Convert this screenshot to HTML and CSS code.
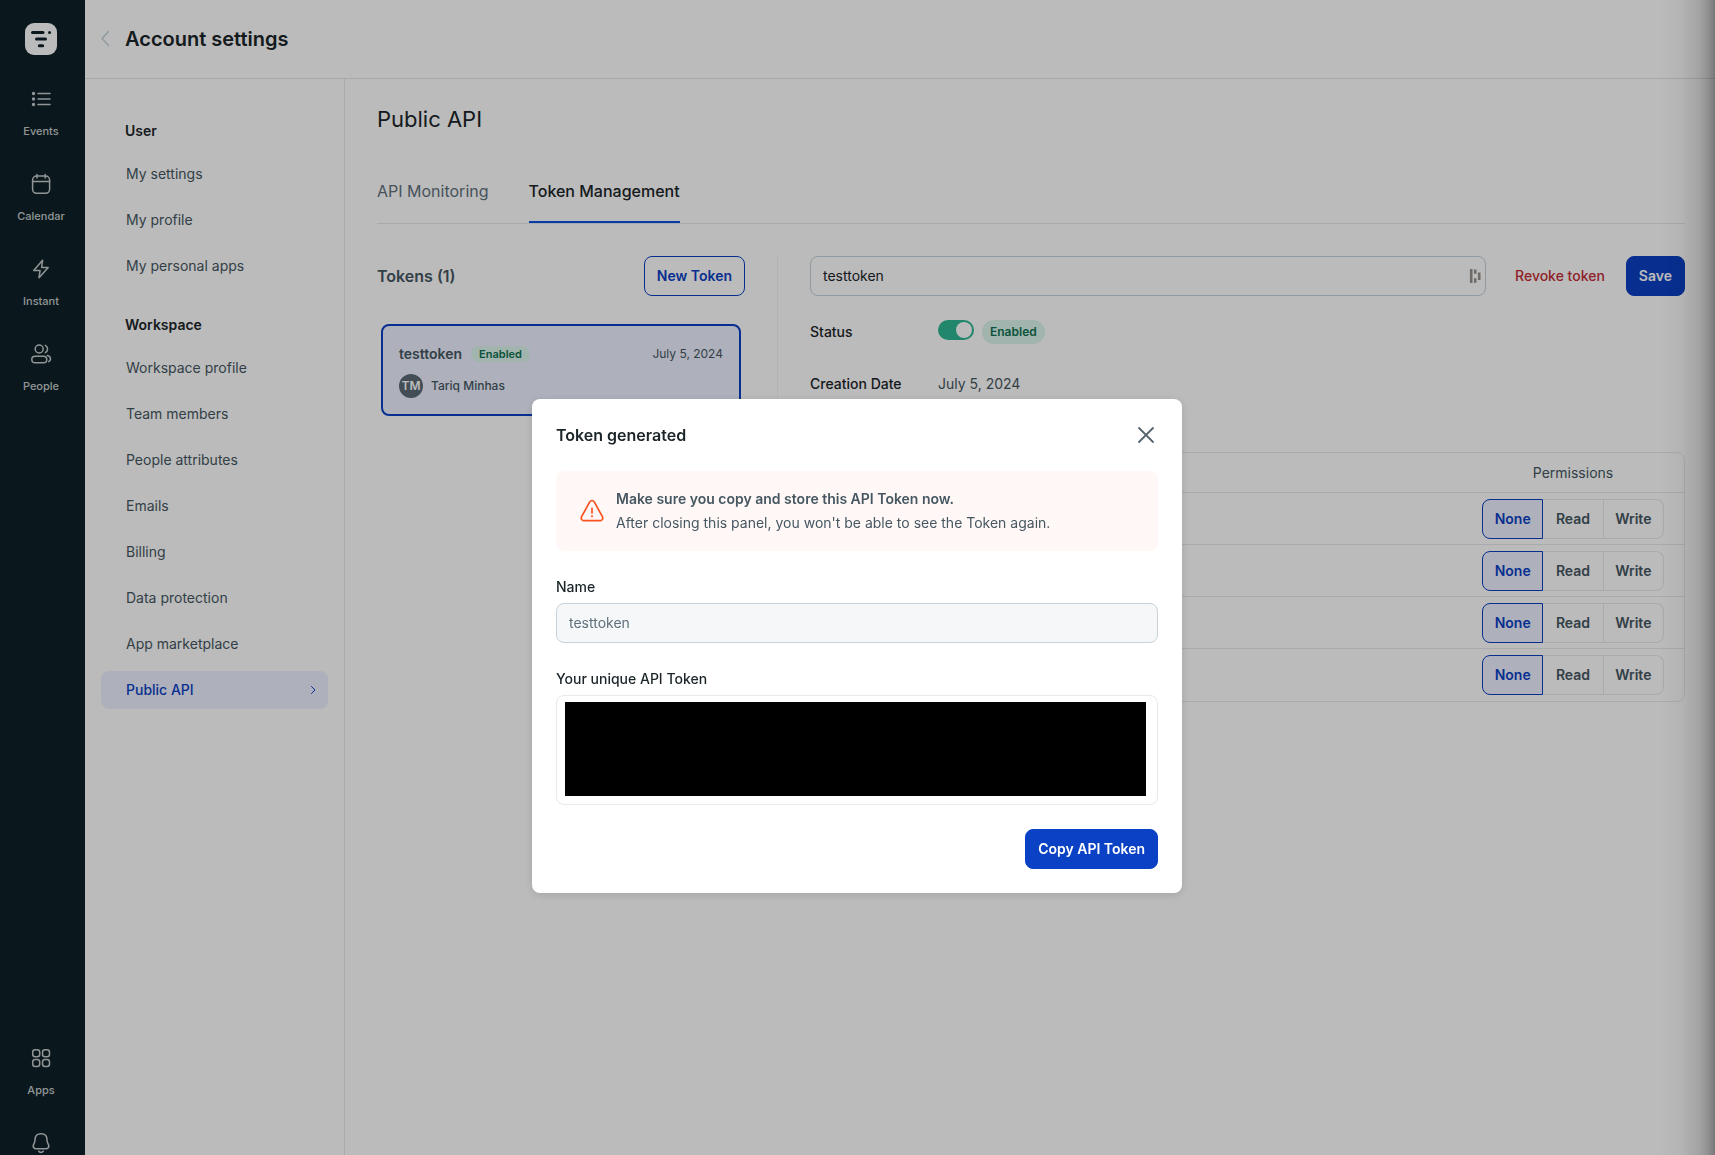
FILE: index.html
```html
<!DOCTYPE html>
<html lang="en">
<head>
<meta charset="utf-8">
<meta name="viewport" content="width=device-width, initial-scale=1">
<title>Account settings</title>
<link rel="stylesheet" href="styles.css">
</head>
<body>
<div class="app">
  <nav class="rail" aria-label="Main">
    <a class="rail-logo" href="#" aria-label="Home">
      <svg width="32" height="32" viewBox="0 0 32 32"><rect width="32" height="32" rx="9" fill="#fff" stroke="none"/><g stroke="#0e2229" stroke-width="3" stroke-linecap="round"><path d="M7.500 9.500h10.500M11.500 16h9M14.300 22.800h3.400"/><path d="M24.500 9.500h.01"/></g></svg>
    </a>
    <a class="rail-item" href="#">
      <svg class="icon" viewBox="0 0 24 24"><path d="M9 6.500h12M9 12h12M9 17.500h12"/><path d="M4.500 6.500h.01M4.500 12h.01M4.500 17.500h.01" stroke-width="3.400"/></svg>
      <span>Events</span>
    </a>
    <a class="rail-item" href="#">
      <svg class="icon" viewBox="0 0 24 24"><rect x="3.600" y="4" width="17" height="17.300" rx="4"/><path d="M3.600 9.500h17M8 2.500V6M16.200 2.500V6"/></svg>
      <span>Calendar</span>
    </a>
    <a class="rail-item" href="#">
      <svg class="icon" viewBox="0 0 24 24"><path d="M13.600 3.300 4.700 13.400h6.400l-1.100 7.300 9.200-10.200h-6.600z"/></svg>
      <span>Instant</span>
    </a>
    <a class="rail-item" href="#">
      <svg class="icon" viewBox="0 0 24 24"><circle cx="10.200" cy="7" r="4"/><rect x="2.800" y="14.200" width="15" height="6.600" rx="3.300"/><path d="M16.300 3.400a4 4 0 0 1 0 7.200M18.300 13.400c4 .8 4 5 1.300 6.200"/></svg>
      <span>People</span>
    </a>
    <div class="rail-bottom">
      <a class="rail-item" href="#">
        <svg class="icon" viewBox="0 0 24 24"><rect x="3.700" y="3.700" width="7" height="7" rx="2.500"/><rect x="13.500" y="3.700" width="7" height="7" rx="2.500"/><rect x="3.700" y="13.500" width="7" height="7" rx="2.500"/><rect x="13.500" y="13.500" width="7" height="7" rx="2.500"/></svg>
        <span>Apps</span>
      </a>
      <a class="rail-item rail-item-last" href="#" aria-label="Notifications">
        <svg class="icon" viewBox="0 0 24 24"><path d="M12 2.800c-4 0-6 2.700-6 6.200 0 3.400-1.800 4-1.800 6 0 1.800 1.200 2.700 2.800 2.700h10c1.600 0 2.800-.9 2.800-2.700 0-2-1.800-2.600-1.800-6 0-3.500-2-6.200-6-6.200zM9.700 20.200c.9 1.600 3.700 1.600 4.600 0"/></svg>
      </a>
    </div>
  </nav>

  <div class="shell">
    <header class="topbar">
      <a class="back" href="#" aria-label="Back"><svg width="10" height="18" viewBox="0 0 10 18"><path d="M8.500 1.500 2 8.500l6.500 7"/></svg></a>
      <h1>Account settings</h1>
    </header>
    <div class="body">
      <nav class="sidenav" aria-label="Settings">
        <section class="nav-group">
          <h2>User</h2>
          <a href="#">My settings</a>
          <a href="#">My profile</a>
          <a href="#">My personal apps</a>
        </section>
        <section class="nav-group">
          <h2>Workspace</h2>
          <a href="#">Workspace profile</a>
          <a href="#">Team members</a>
          <a href="#">People attributes</a>
          <a href="#">Emails</a>
          <a href="#">Billing</a>
          <a href="#">Data protection</a>
          <a href="#">App marketplace</a>
          <a class="active" href="#" aria-current="page">Public API <svg width="6" height="10" viewBox="0 0 6 10"><path d="m1.500 1.500 3.500 3.500-3.500 3.500"/></svg></a>
        </section>
      </nav>

      <main class="content">
        <h2 class="page-title">Public API</h2>
        <div class="tabs">
          <a href="#">API Monitoring</a>
          <a class="selected" href="#">Token Management</a>
        </div>
        <div class="columns">
          <section class="tokens">
            <div class="tokens-head">
              <h3>Tokens (1)</h3>
              <button class="btn btn-outline" type="button">New Token</button>
            </div>
            <article class="token-card">
              <div class="token-row">
                <strong>testtoken</strong>
                <span class="badge badge-small">Enabled</span>
                <time>July 5, 2024</time>
              </div>
              <div class="token-owner"><span class="avatar">TM</span>Tariq Minhas</div>
            </article>
          </section>

          <section class="detail">
            <form class="detail-head">
              <div class="name-field">
                <input type="text" value="testtoken" aria-label="Token name">
                <svg width="12" height="16" viewBox="0 0 12 16"><path d="M2.200 1v14M6.200 1.500v4.300M6.200 10.300v4.400M10.200 4.500v7.500"/></svg>
              </div>
              <button class="link-danger" type="button">Revoke token</button>
              <button class="btn btn-primary" type="submit">Save</button>
            </form>
            <dl class="facts">
              <dt><label for="status">Status</label></dt>
              <dd><input class="toggle" id="status" type="checkbox" checked><span class="badge">Enabled</span></dd>
              <dt>Creation Date</dt>
              <dd>July 5, 2024</dd>
            </dl>
            <table class="perms">
              <thead><tr><th></th><th class="perm-col">Permissions</th></tr></thead>
              <tbody>
                <tr><td></td><td><div class="segment">
                  <label><input type="radio" name="p1" checked>None</label><label><input type="radio" name="p1">Read</label><label><input type="radio" name="p1">Write</label></div></td></tr>
                <tr><td></td><td><div class="segment">
                  <label><input type="radio" name="p2" checked>None</label><label><input type="radio" name="p2">Read</label><label><input type="radio" name="p2">Write</label></div></td></tr>
                <tr><td></td><td><div class="segment">
                  <label><input type="radio" name="p3" checked>None</label><label><input type="radio" name="p3">Read</label><label><input type="radio" name="p3">Write</label></div></td></tr>
                <tr><td></td><td><div class="segment">
                  <label><input type="radio" name="p4" checked>None</label><label><input type="radio" name="p4">Read</label><label><input type="radio" name="p4">Write</label></div></td></tr>
              </tbody>
            </table>
          </section>
        </div>
      </main>
    </div>
  </div>
</div>

<div class="scrim">
  <div class="modal" role="dialog" aria-modal="true" aria-labelledby="modal-title">
    <div class="modal-head">
      <h2 id="modal-title">Token generated</h2>
      <button class="close" type="button" aria-label="Close"><svg width="24" height="24" viewBox="0 0 24 24"><path d="m5 5 14 14M19 5 5 19"/></svg></button>
    </div>
    <div class="notice">
      <svg width="24" height="24" viewBox="0 0 24 24"><path d="M9.900 2.700 1.600 17.600c-1 2 .2 4.100 2.200 4.100h16.400c2 0 3.200-2.100 2.200-4.100L14.100 2.700c-1-1.600-3.200-1.600-4.200 0z"/><path d="M12 9.300v4.600M12 16.900v.6"/></svg>
      <p><strong>Make sure you copy and store this API Token now.</strong><br>After closing this panel, you won't be able to see the Token again.</p>
    </div>
    <div class="field">
      <label for="name">Name</label>
      <input id="name" type="text" value="testtoken" readonly>
    </div>
    <div class="field">
      <label for="token">Your unique API Token</label>
      <div class="token-box"><output id="token"></output></div>
    </div>
    <div class="modal-foot"><button class="btn btn-primary" type="button">Copy API Token</button></div>
  </div>
</div>
<div class="edge-shadow"></div>
</body>
</html>
```
FILE: styles.css
```css
:root {
  --ink: #1b2529;
  --text: #465762;
  --line: #e5eaed;
  --field: #c6d3da;
  --blue: #0b41c5;
  --blue-tint: #edf1ff;
}

* { box-sizing: border-box; }

body {
  margin: 0;
  font: 14px/24px Inter, "Liberation Sans", sans-serif;
  color: var(--text);
  background: #fff;
  overflow: hidden;
}

h1, h2, h3, p, dl, dd { margin: 0; }
a { color: inherit; text-decoration: none; }
button, input { font: inherit; color: inherit; }
button { cursor: pointer; }
svg { flex: none; fill: none; stroke: currentColor; stroke-linecap: round; stroke-linejoin: round; }

.app { display: flex; min-height: 100vh; }

/* Icon rail */
.rail {
  display: flex;
  flex-direction: column;
  width: 85px;
  height: 100vh;
  padding: 23px 3px 0 0;
  background: #0e2229;
  color: #c6cbcd;
}
.rail-logo { display: flex; align-self: center; height: 34px; }
.rail-item {
  display: flex;
  flex-direction: column;
  align-items: center;
  gap: 12px;
  height: 85px;
  padding-top: 30px;
  font-size: 11px;
  line-height: 16px;
  font-weight: 500;
}
.icon { width: 24px; height: 24px; stroke-width: 1.5; }
.rail-bottom { margin-top: auto; }
.rail-item-last { height: 54px; }

/* Header */
.shell { flex: 1; display: flex; flex-direction: column; min-width: 0; }
.topbar {
  display: flex;
  align-items: center;
  gap: 15px;
  height: 79px;
  padding: 0 15px;
  border-bottom: 1px solid #dde5e9;
}
.topbar h1 { font-size: 20px; font-weight: 600; color: var(--ink); }
.back { display: flex; color: #c6d3da; }
.back svg { stroke-width: 1.5; }
.body { flex: 1; display: flex; }

/* Settings navigation */
.sidenav {
  display: flex;
  flex-direction: column;
  gap: 28px;
  width: 260px;
  padding: 40px 16px;
  border-right: 1px solid var(--line);
}
.nav-group { display: flex; flex-direction: column; gap: 8px; }
.nav-group h2 { margin: 0 24px 4px; font-size: 14px; font-weight: 600; color: var(--ink); }
.nav-group a {
  display: flex;
  align-items: center;
  justify-content: space-between;
  height: 38px;
  padding: 0 12px 0 25px;
  border-radius: 8px;
}
.nav-group .active { background: var(--blue-tint); color: var(--blue); font-weight: 500; }

/* Content */
.content { flex: 1; min-width: 0; padding: 24px 30px 32px 32px; }
.page-title { font-size: 22px; line-height: 32px; font-weight: 400; color: var(--ink); }
.tabs { display: flex; gap: 40px; margin: 44px 0 32px; border-bottom: 1px solid var(--line); }
.tabs a { padding-bottom: 18px; border-bottom: 2px solid transparent; font-size: 16px; color: #5f717d; }
.tabs .selected { border-color: #0b50e6; font-weight: 500; color: var(--ink); }
.columns { display: flex; }

.btn {
  height: 40px;
  padding: 0 12px;
  border: 1px solid var(--blue);
  border-radius: 8px;
  font-weight: 600;
  white-space: nowrap;
}
.btn-primary { background: var(--blue); color: #fff; }
.btn-outline { background: #fff; color: var(--blue); }

.tokens { width: 401px; padding-right: 32px; border-right: 1px solid #f3f5f6; min-height: 445px; }
.tokens-head { display: flex; align-items: center; justify-content: space-between; }
.tokens-head h3 { font-size: 16px; font-weight: 600; }
.token-card {
  display: flex;
  flex-direction: column;
  gap: 8px;
  height: 92px;
  margin: 28px 4px 0;
  padding: 16px;
  border: 2px solid var(--blue);
  border-radius: 8px;
  background: var(--blue-tint);
  font-size: 12px;
}
.token-row { display: flex; align-items: center; gap: 9px; }
.token-row strong { font-size: 14px; font-weight: 600; }
.token-row time { margin-left: auto; }
.token-owner { display: flex; align-items: center; gap: 8px; font-weight: 500; }
.avatar {
  display: grid;
  place-items: center;
  width: 24px;
  height: 24px;
  border-radius: 50%;
  background: #5b6a75;
  color: #fff;
  font-weight: 600;
}
.badge {
  padding: 0 8px;
  border-radius: 12px;
  background: #dcf6ee;
  color: #0f714f;
  font-size: 12px;
  font-weight: 600;
}
.badge-small { font-size: 11px; line-height: 16px; }

.detail { flex: 1; min-width: 0; padding-left: 32px; }
.detail-head { display: flex; align-items: center; }
.name-field {
  flex: 1;
  display: flex;
  align-items: center;
  height: 40px;
  padding: 0 4px 0 12px;
  border: 1px solid var(--field);
  border-radius: 8px;
}
.name-field input { flex: 1; min-width: 0; padding: 0; border: 0; background: none; outline: 0; color: var(--ink); }
.name-field svg { stroke: #96938f; stroke-width: 2.6; stroke-linecap: butt; }
.link-danger { margin: 0 21px 0 29px; padding: 0; border: 0; background: none; color: #c42d37; font-weight: 500; }

.facts { display: grid; grid-template-columns: 128px 1fr; row-gap: 28px; margin: 24px 0 56px; }
.facts dt { font-weight: 500; color: var(--ink); }
.facts dd { display: flex; align-items: flex-start; gap: 8px; }
.toggle {
  appearance: none;
  display: flex;
  justify-content: flex-end;
  width: 36px;
  height: 20px;
  margin: 0;
  padding: 2px;
  border-radius: 10px;
  background: #2eb793;
}
.toggle::before { content: ""; width: 16px; height: 16px; border-radius: 50%; background: #fff; }

.perms {
  width: 100%;
  border: 1px solid var(--line);
  border-radius: 8px;
  border-spacing: 0;
}
.perms th { height: 40px; padding: 0; border-bottom: 1px solid var(--line); font-weight: 400; }
.perms td { height: 52px; padding: 0; border-bottom: 1px solid var(--line); }
.perms tr:last-child td { border-bottom: 0; }
.perms .perm-col { width: 222px; }
.segment { display: flex; margin: 0 20px; }
.segment label {
  flex: 1;
  height: 40px;
  border: 1px solid var(--line);
  border-left: 0;
  line-height: 38px;
  text-align: center;
  font-weight: 600;
}
.segment label:first-child { border-left: 1px solid var(--line); border-radius: 8px 0 0 8px; }
.segment label:last-child { border-radius: 0 8px 8px 0; }
.segment label:has(:checked) { border-color: var(--blue); background: var(--blue-tint); color: var(--blue); }
.segment input { position: absolute; opacity: 0; }

/* Dialog */
.scrim {
  position: fixed;
  inset: 0;
  display: flex;
  align-items: flex-start;
  justify-content: center;
  padding: 399px 16px 0 15px;
  background: rgba(0, 0, 0, .267);
}
.modal {
  display: flex;
  flex-direction: column;
  gap: 24px;
  width: 100%;
  max-width: 650px;
  padding: 24px;
  border-radius: 8px;
  background: #fff;
  box-shadow: 0 2px 10px rgba(0, 0, 0, .12);
}
.modal-head { display: flex; align-items: center; justify-content: space-between; }
.modal-head h2 { font-size: 16px; font-weight: 600; color: var(--ink); }
.close { display: flex; padding: 0; border: 0; background: none; color: #55646f; }
.close svg { stroke-width: 1.8; }
.notice { display: flex; align-items: center; gap: 12px; padding: 16px 24px; border-radius: 8px; background: #fff8f6; }
.notice svg { stroke: #f9531f; stroke-width: 1.7; }
.notice strong { font-weight: 600; }
.field { display: flex; flex-direction: column; gap: 4px; }
.field label { font-weight: 500; color: var(--ink); }
.field input {
  height: 40px;
  padding: 0 12px 2px;
  border: 1px solid var(--field);
  border-radius: 8px;
  background: #f5f7f9;
  color: #5f707b;
}
.token-box { display: flex; height: 110px; padding: 6px 11px 8px 8px; border: 1px solid var(--line); border-radius: 8px; }
.token-box output { flex: 1; background: #000; }
.modal-foot { display: flex; justify-content: flex-end; }

/* Shade of the panel docked past the right edge */
.edge-shadow {
  position: fixed;
  inset: 0 0 0 auto;
  width: 56px;
  background: linear-gradient(to right, rgba(0, 0, 0, 0), rgba(0, 0, 0, .04) 40%, rgba(0, 0, 0, .12) 70%, rgba(0, 0, 0, .22) 87%, rgba(0, 0, 0, .36));
  pointer-events: none;
}
```
